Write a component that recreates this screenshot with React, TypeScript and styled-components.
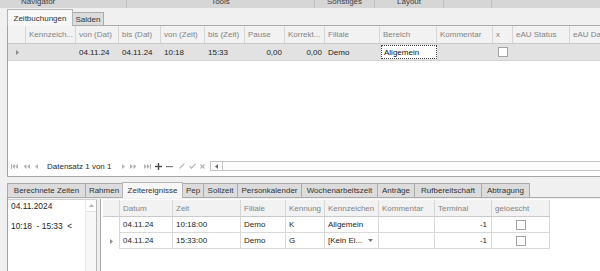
import React from "react";
import styled, { createGlobalStyle } from "styled-components";

const Global = createGlobalStyle`
  html, body { margin: 0; padding: 0; background: #f0f0f0; }
  body { font-family: "Liberation Sans", Arial, sans-serif; font-size: 8px; color: #222; overflow: hidden; }
  * { box-sizing: border-box; }
`;

const Screen = styled.div`
  width: 600px;
  height: 271px;
  overflow: hidden;
  display: flex;
  flex-direction: column;
  background: #f0f0f0;
`;

const Ribbon = styled.div`
  height: 8px;
  flex: none;
  display: flex;
  background: #d6d6d6;
  overflow: hidden;
`;

const RibbonGroup = styled.div<{ $w?: number; $pl?: number; $center?: boolean; $last?: boolean }>`
  flex: ${(p) => (p.$w ? `0 0 ${p.$w}px` : "1 1 auto")};
  border-right: ${(p) => (p.$last ? "none" : "1px solid #c0c0c0")};
  display: flex;
  justify-content: ${(p) => (p.$center ? "center" : "flex-start")};
  padding-left: ${(p) => p.$pl ?? 0}px;
  overflow: hidden;
`;

const RibbonLabel = styled.span`
  line-height: 8px;
  margin-top: -2px;
  color: #3c3c3c;
  white-space: nowrap;
`;

const TabStrip = styled.div<{ $h: number; $mt?: number }>`
  height: ${(p) => p.$h}px;
  margin-top: ${(p) => p.$mt ?? 0}px;
  flex: none;
  display: flex;
  align-items: flex-end;
  padding-left: 7px;
`;

const Tab = styled.div<{ $w: number; $h: number; $active?: boolean }>`
  flex: 0 0 ${(p) => p.$w}px;
  height: ${(p) => p.$h}px;
  margin-left: -1px;
  margin-bottom: ${(p) => (p.$active ? "-1px" : "0")};
  border: 1px solid ${(p) => (p.$active ? "#b4b4b4" : "#ababab")};
  border-bottom: none;
  background: ${(p) => (p.$active ? "#f7f7f7" : "#dcdcdc")};
  z-index: ${(p) => (p.$active ? 2 : 1)};
  display: flex;
  align-items: center;
  justify-content: center;
  color: #333;
  white-space: nowrap;
  &:first-child { margin-left: 0; }
`;

const Page = styled.div<{ $h?: number }>`
  margin-left: 7px;
  ${(p) => (p.$h ? `height: ${p.$h}px; flex: none;` : "flex: 1;")}
  border-left: 1px solid #a2a2a2;
  border-top: 1px solid #ababab;
  display: flex;
  flex-direction: column;
  overflow: hidden;
`;

const TopPage = styled(Page)`
  border-bottom: 1px solid #a6a6a6;
  background: #fff;
`;

const GridRow = styled.div<{ $cols: string; $h: number; $bg?: string }>`
  display: grid;
  grid-template-columns: ${(p) => p.$cols};
  height: ${(p) => p.$h}px;
  flex: none;
  background: ${(p) => p.$bg ?? "transparent"};
`;

const HeadCell = styled.div<{ $blank?: boolean }>`
  background: ${(p) => (p.$blank ? "transparent" : "#f2f2f2")};
  border-right: ${(p) => (p.$blank ? "none" : "1px solid #d6d6d6")};
  border-bottom: ${(p) => (p.$blank ? "none" : "1px solid #c9c9c9")};
  color: #838383;
  padding-left: 3px;
  display: flex;
  align-items: center;
  overflow: hidden;
  white-space: nowrap;
`;

const TopDataRow = styled(GridRow)`
  border-bottom: 1px solid #d2d2d2;
`;

const DataCell = styled.div<{ $align?: "left" | "right" | "center" }>`
  display: flex;
  align-items: center;
  justify-content: ${(p) =>
    p.$align === "right" ? "flex-end" : p.$align === "center" ? "center" : "flex-start"};
  padding: 0 3px;
  color: #1e1e1e;
  white-space: nowrap;
  overflow: hidden;
`;

const FocusCell = styled.div`
  margin: 1px 0 1px 1px;
  background: #fff;
  border: 1px dotted #444;
  display: flex;
  align-items: center;
  padding-left: 2px;
  color: #111;
  white-space: nowrap;
  overflow: hidden;
`;

const Check = styled.span`
  width: 10px;
  height: 10px;
  background: #fff;
  border: 1px solid #a3a3a3;
  display: block;
`;

const GridBody = styled.div`
  flex: 1;
  background: #fff;
`;

const Footer = styled.div`
  height: 14px;
  flex: none;
  display: flex;
  align-items: center;
  padding-left: 3px;
  margin-bottom: 3px;
`;

const NavIcon = styled.svg<{ $ml?: number }>`
  flex: none;
  margin-left: ${(p) => p.$ml ?? 0}px;
  display: block;
`;

const NavText = styled.span<{ $w: number; $ml: number }>`
  flex: 0 0 ${(p) => p.$w}px;
  margin-left: ${(p) => p.$ml}px;
  color: #2a2a2a;
  white-space: nowrap;
`;

const HScroll = styled.div`
  flex: 1;
  margin-left: 5px;
  height: 10px;
  border: 1px solid #c3c3c3;
  border-right: none;
  background: #fbfbfb;
  display: flex;
`;

const ScrollBtn = styled.div<{ $vertical?: boolean }>`
  flex: none;
  width: ${(p) => (p.$vertical ? "100%" : "12px")};
  height: ${(p) => (p.$vertical ? "12px" : "100%")};
  border-right: ${(p) => (p.$vertical ? "none" : "1px solid #c3c3c3")};
  border-bottom: ${(p) => (p.$vertical ? "1px solid #e2e2e2" : "none")};
  background: #fdfdfd;
  display: flex;
  align-items: center;
  justify-content: center;
`;

const BottomPage = styled(Page)`
  flex-direction: row;
  padding-top: 1px;
`;

const LeftList = styled.div`
  flex: 0 0 89px;
  display: flex;
  background: #fff;
  border-top: 1px solid #d0d0d0;
`;

const ListContent = styled.div`
  flex: 1;
  padding: 1px 0 0 3px;
  display: flex;
  flex-direction: column;
  font-size: 8.4px;
  color: #1e1e1e;
`;

const ListLine = styled.div<{ $mt?: number }>`
  height: 10px;
  line-height: 10px;
  margin-top: ${(p) => p.$mt ?? 0}px;
  white-space: pre;
`;

const VScroll = styled.div`
  flex: 0 0 12px;
  background: #f7f7f7;
  border-left: 1px solid #ececec;
  border-right: 1px solid #b8b8b8;
`;

const Splitter = styled.div`
  flex: 0 0 4px;
  background: #eeeeee;
  border-right: 1px solid #a8a8a8;
`;

const RightGrid = styled.div`
  flex: 1;
  background: #fff;
  padding: 1px 0 0 2px;
  display: flex;
  flex-direction: column;
  overflow: hidden;
`;

const RowCell = styled.div<{ $align?: "left" | "right" | "center"; $blank?: boolean; $indicator?: boolean }>`
  display: flex;
  align-items: center;
  justify-content: ${(p) =>
    p.$align === "right" ? "flex-end" : p.$align === "center" ? "center" : "flex-start"};
  padding: ${(p) => (p.$align === "right" ? "0 4px 0 3px" : "0 3px")};
  border-right: ${(p) => (p.$blank ? "none" : "1px solid #d9d9d9")};
  border-bottom: ${(p) => (p.$blank || p.$indicator ? "none" : "1px solid #d9d9d9")};
  color: #1e1e1e;
  white-space: nowrap;
  overflow: hidden;
`;

const ComboCell = styled(RowCell)`
  justify-content: space-between;
  padding-right: 5px;
`;

const Tri = ({ dir = "right", color = "#8a8a8a" }: { dir?: "right" | "left" | "up"; color?: string }) => {
  if (dir === "up")
    return (
      <svg width="5" height="3" viewBox="0 0 5 3">
        <polygon points="0,3 2.5,0 5,3" fill={color} />
      </svg>
    );
  return (
    <svg width="3" height="5" viewBox="0 0 3 5">
      <polygon points={dir === "right" ? "0,0 3,2.5 0,5" : "3,0 0,2.5 3,5"} fill={color} />
    </svg>
  );
};

const DIS = "#b3b3b3";

const Navigator = () => (
  <Footer>
    <NavIcon width="7" height="5" viewBox="0 0 7 5">
      <rect x="0" y="0" width="1" height="5" fill={DIS} />
      <polygon points="4,0 1.2,2.5 4,5" fill={DIS} />
      <polygon points="7,0 4.2,2.5 7,5" fill={DIS} />
    </NavIcon>
    <NavIcon $ml={5} width="7" height="5" viewBox="0 0 7 5">
      <polygon points="3.5,0 0.5,2.5 3.5,5" fill={DIS} />
      <polygon points="7,0 4,2.5 7,5" fill={DIS} />
    </NavIcon>
    <NavIcon $ml={5} width="3" height="5" viewBox="0 0 3 5">
      <polygon points="3,0 0,2.5 3,5" fill={DIS} />
    </NavIcon>
    <NavText $ml={9} $w={75}>Datensatz 1 von 1</NavText>
    <NavIcon width="3" height="5" viewBox="0 0 3 5">
      <polygon points="0,0 3,2.5 0,5" fill={DIS} />
    </NavIcon>
    <NavIcon $ml={5} width="7" height="5" viewBox="0 0 7 5">
      <polygon points="0,0 3,2.5 0,5" fill={DIS} />
      <polygon points="3.5,0 6.5,2.5 3.5,5" fill={DIS} />
    </NavIcon>
    <NavIcon $ml={7} width="7" height="5" viewBox="0 0 7 5">
      <polygon points="0,0 2.8,2.5 0,5" fill={DIS} />
      <polygon points="3,0 5.8,2.5 3,5" fill={DIS} />
      <rect x="6" y="0" width="1" height="5" fill={DIS} />
    </NavIcon>
    <NavIcon $ml={4} width="7" height="7" viewBox="0 0 7 7">
      <rect x="0" y="2.8" width="7" height="1.4" fill="#4a4a4a" />
      <rect x="2.8" y="0" width="1.4" height="7" fill="#4a4a4a" />
    </NavIcon>
    <NavIcon $ml={4} width="7" height="7" viewBox="0 0 7 7">
      <rect x="0" y="3" width="7" height="1.2" fill="#7c7c7c" />
    </NavIcon>
    <NavIcon $ml={6} width="6" height="6" viewBox="0 0 6 6">
      <line x1="0.6" y1="5.4" x2="5.4" y2="0.6" stroke={DIS} strokeWidth="1.3" />
    </NavIcon>
    <NavIcon $ml={4} width="7" height="6" viewBox="0 0 7 6">
      <polyline points="0.5,3.2 2.5,5.2 6.5,0.6" fill="none" stroke={DIS} strokeWidth="1.2" />
    </NavIcon>
    <NavIcon $ml={4} width="5" height="5" viewBox="0 0 5 5">
      <line x1="0.5" y1="0.5" x2="4.5" y2="4.5" stroke={DIS} strokeWidth="1.1" />
      <line x1="4.5" y1="0.5" x2="0.5" y2="4.5" stroke={DIS} strokeWidth="1.1" />
    </NavIcon>
    <HScroll>
      <ScrollBtn>
        <Tri dir="left" color="#6a6a6a" />
      </ScrollBtn>
    </HScroll>
  </Footer>
);

const TOP_COLS = "18px 50px 43px 42px 44px 40px 40px 40px 55px 57px 56px 20px 57px 60px";
const TOP_HEADERS = [
  "",
  "Kennzeich...",
  "von (Dat)",
  "bis (Dat)",
  "von (Zeit)",
  "bis (Zeit)",
  "Pause",
  "Korrekt...",
  "Filiale",
  "Bereich",
  "Kommentar",
  "x",
  "eAU Status",
  "eAU Datum",
];

const BOTTOM_COLS = "17px 53px 68px 45px 39px 54px 56px 57px 58px 1fr";
const BOTTOM_HEADERS = ["", "Datum", "Zeit", "Filiale", "Kennung", "Kennzeichen", "Kommentar", "Terminal", "geloescht"];

const LOWER_TABS: { label: string; w: number; active?: boolean }[] = [
  { label: "Berechnete Zeiten", w: 79 },
  { label: "Rahmen", w: 38 },
  { label: "Zeitereignisse", w: 61, active: true },
  { label: "Pep", w: 22 },
  { label: "Sollzeit", w: 35 },
  { label: "Personkalender", w: 65 },
  { label: "Wochenarbeitszeit", w: 77 },
  { label: "Anträge", w: 38 },
  { label: "Rufbereitschaft", w: 68 },
  { label: "Abtragung", w: 49 },
];

const EVENTS = [
  { datum: "04.11.24", zeit: "10:18:00", filiale: "Demo", kennung: "K", kz: "Allgemein", combo: false, current: false },
  { datum: "04.11.24", zeit: "15:33:00", filiale: "Demo", kennung: "G", kz: "[Kein Ei...", combo: true, current: true },
];

export default function App() {
  return (
    <>
      <Global />
      <Screen>
        <Ribbon>
          <RibbonGroup $w={127} $pl={21}>
            <RibbonLabel>Navigator</RibbonLabel>
          </RibbonGroup>
          <RibbonGroup $w={188} $center>
            <RibbonLabel>Tools</RibbonLabel>
          </RibbonGroup>
          <RibbonGroup $w={60} $center>
            <RibbonLabel>Sonstiges</RibbonLabel>
          </RibbonGroup>
          <RibbonGroup $w={69} $center>
            <RibbonLabel>Layout</RibbonLabel>
          </RibbonGroup>
          <RibbonGroup $w={48} />
          <RibbonGroup $last />
        </Ribbon>

        <TabStrip $h={17}>
          <Tab $w={66} $h={17} $active>
            Zeitbuchungen
          </Tab>
          <Tab $w={32} $h={13}>
            Salden
          </Tab>
        </TabStrip>

        <TopPage $h={152}>
          <GridRow $cols={TOP_COLS} $h={18}>
            {TOP_HEADERS.map((h, i) => (
              <HeadCell key={i}>{h}</HeadCell>
            ))}
          </GridRow>
          <TopDataRow $cols={TOP_COLS} $h={17} $bg="#e2e2e2">
            <DataCell $align="center">
              <Tri />
            </DataCell>
            <DataCell />
            <DataCell>04.11.24</DataCell>
            <DataCell>04.11.24</DataCell>
            <DataCell>10:18</DataCell>
            <DataCell>15:33</DataCell>
            <DataCell $align="right">0,00</DataCell>
            <DataCell $align="right">0,00</DataCell>
            <DataCell>Demo</DataCell>
            <FocusCell>Allgemein</FocusCell>
            <DataCell />
            <DataCell $align="center">
              <Check />
            </DataCell>
            <DataCell />
            <DataCell />
          </TopDataRow>
          <GridBody />
          <Navigator />
        </TopPage>

        <TabStrip $h={16} $mt={4}>
          {LOWER_TABS.map((t) => (
            <Tab key={t.label} $w={t.w} $h={t.active ? 16 : 14} $active={t.active}>
              {t.label}
            </Tab>
          ))}
        </TabStrip>

        <BottomPage>
          <LeftList>
            <ListContent>
              <ListLine>04.11.2024</ListLine>
              <ListLine $mt={10}>{"10:18  - 15:33  <"}</ListLine>
            </ListContent>
            <VScroll>
              <ScrollBtn $vertical>
                <Tri dir="up" color="#b5b5b5" />
              </ScrollBtn>
            </VScroll>
          </LeftList>
          <Splitter />
          <RightGrid>
            <GridRow $cols={BOTTOM_COLS} $h={17}>
              {BOTTOM_HEADERS.map((h, i) => (
                <HeadCell key={i}>{h}</HeadCell>
              ))}
              <HeadCell $blank />
            </GridRow>
            {EVENTS.map((e, i) => (
              <GridRow key={i} $cols={BOTTOM_COLS} $h={16}>
                <RowCell $indicator $align="center">
                  {e.current ? <Tri /> : null}
                </RowCell>
                <RowCell>{e.datum}</RowCell>
                <RowCell>{e.zeit}</RowCell>
                <RowCell>{e.filiale}</RowCell>
                <RowCell>{e.kennung}</RowCell>
                {e.combo ? (
                  <ComboCell>
                    <span>{e.kz}</span>
                    <svg width="5" height="3" viewBox="0 0 5 3">
                      <polygon points="0,0 5,0 2.5,3" fill="#7a7a7a" />
                    </svg>
                  </ComboCell>
                ) : (
                  <RowCell>{e.kz}</RowCell>
                )}
                <RowCell />
                <RowCell $align="right">-1</RowCell>
                <RowCell $align="center">
                  <Check />
                </RowCell>
                <RowCell $blank />
              </GridRow>
            ))}
          </RightGrid>
        </BottomPage>
      </Screen>
    </>
  );
}
